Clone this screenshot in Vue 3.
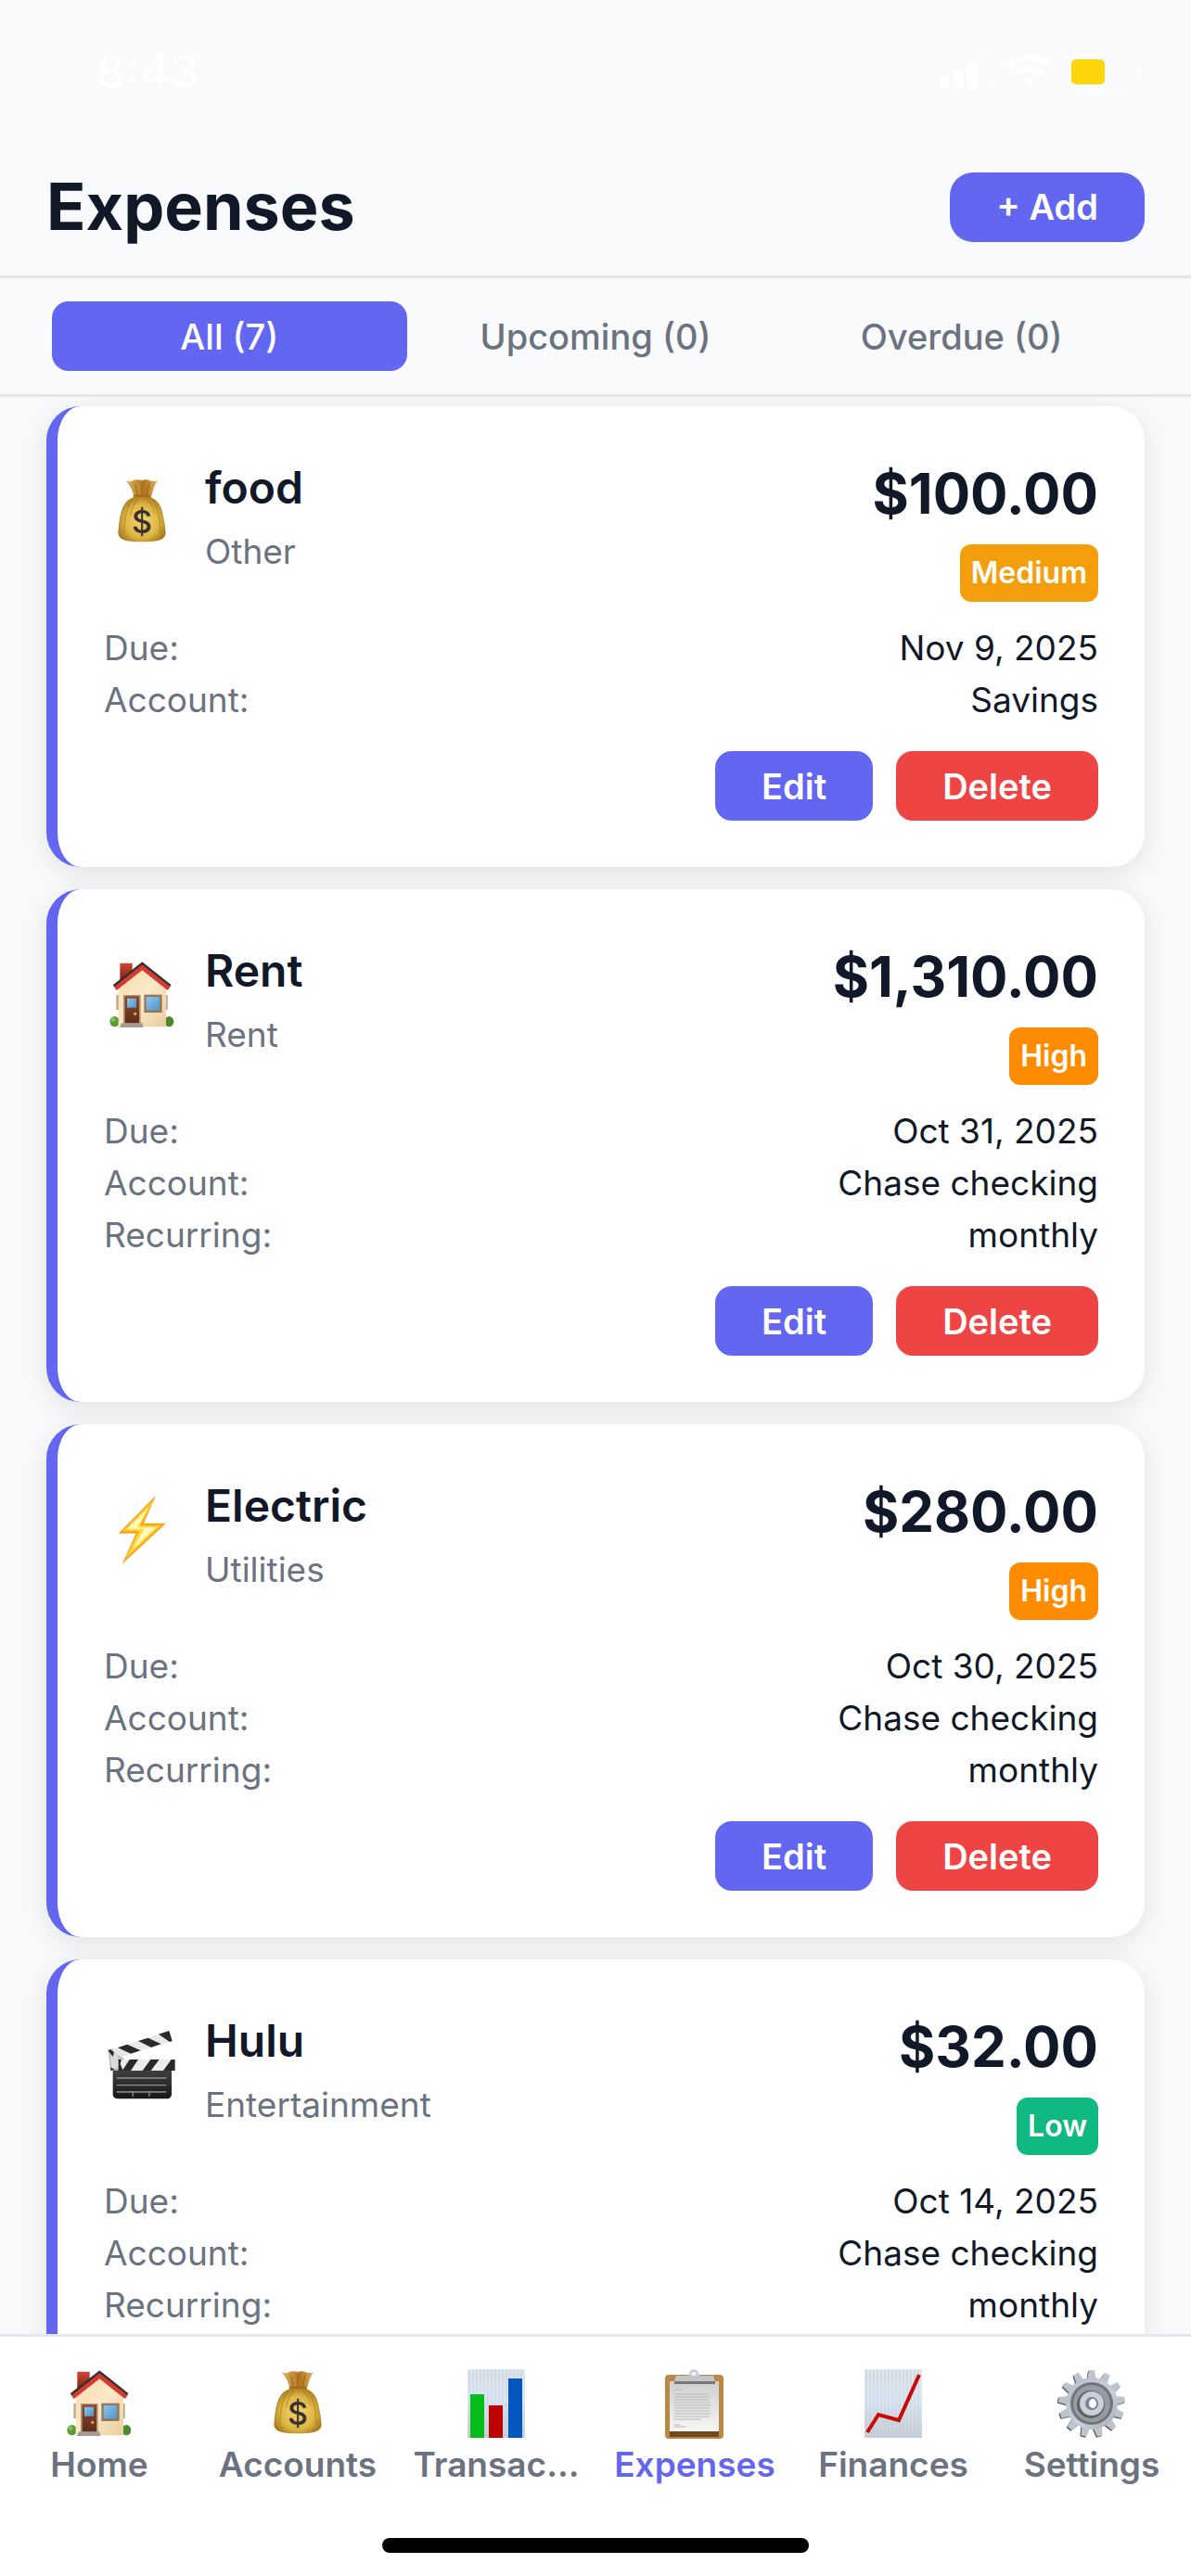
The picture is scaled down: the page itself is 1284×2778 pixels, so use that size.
<template>
  <div class="screen">
    <!-- shared icon shapes -->
    <svg class="sprite" aria-hidden="true">
      <defs>
        <linearGradient id="wall" x1="0" x2="1" y1="0" y2="1">
          <stop offset="0" stop-color="#f6dcae" />
          <stop offset="0.5" stop-color="#fbe9c8" />
          <stop offset="1" stop-color="#e8cd9f" />
        </linearGradient>
        <linearGradient id="door" x1="0" x2="0" y1="0" y2="1">
          <stop offset="0" stop-color="#8d4a2c" />
          <stop offset="1" stop-color="#5e2c1b" />
        </linearGradient>
        <linearGradient id="glass" x1="0" x2="1" y1="0" y2="1">
          <stop offset="0" stop-color="#8cc5ea" />
          <stop offset="1" stop-color="#4f97cf" />
        </linearGradient>
        <linearGradient id="chimney" x1="0" x2="0" y1="0" y2="1">
          <stop offset="0" stop-color="#d2452f" />
          <stop offset="1" stop-color="#6d1c18" />
        </linearGradient>
        <radialGradient id="sack" cx="0.5" cy="0.55" r="0.6">
          <stop offset="0" stop-color="#f2d768" />
          <stop offset="0.6" stop-color="#ddb645" />
          <stop offset="1" stop-color="#9a6a12" />
        </radialGradient>
        <linearGradient id="neck" x1="0" x2="1" y1="0" y2="0">
          <stop offset="0" stop-color="#d9b262" />
          <stop offset="0.35" stop-color="#c4903a" />
          <stop offset="0.6" stop-color="#b3741c" />
          <stop offset="1" stop-color="#e0b765" />
        </linearGradient>
        <linearGradient id="slate" x1="0" x2="0" y1="0" y2="1">
          <stop offset="0" stop-color="#3f3f3f" />
          <stop offset="1" stop-color="#171717" />
        </linearGradient>
        <linearGradient id="sheet" x1="0" x2="0" y1="0" y2="1">
          <stop offset="0" stop-color="#dde4ea" />
          <stop offset="0.4" stop-color="#dbe8f4" />
          <stop offset="1" stop-color="#c7ced6" />
        </linearGradient>
        <linearGradient id="paper" x1="0" x2="0" y1="0" y2="1">
          <stop offset="0" stop-color="#cfcfcf" />
          <stop offset="1" stop-color="#f6f6f6" />
        </linearGradient>
        <linearGradient id="steel" x1="0" x2="1" y1="0" y2="1">
          <stop offset="0" stop-color="#b4bfca" />
          <stop offset="0.6" stop-color="#c9cdd6" />
          <stop offset="1" stop-color="#a5a9b2" />
        </linearGradient>
      </defs>

      <symbol id="icon-house" viewBox="46 46 228 228">
        <ellipse cx="72" cy="246" rx="16" ry="17" fill="#5c9c38" />
        <ellipse cx="248" cy="246" rx="15" ry="17" fill="#4d8a2c" />
        <circle cx="67" cy="240" r="7" fill="#86c05c" />
        <path d="M89 57h40v30l-40 36z" fill="url(#chimney)" />
        <path d="M77 160h10v48H77zM235 160h8v48h-8z" fill="#bfa58a" />
        <path d="M84 130L160 72l78 58v133H84z" fill="url(#wall)" />
        <path d="M66 128L161 53l94 75-9 9-85-66-87 66z" fill="#33302f" />
        <path d="M70 134L161 62l91 72-9 11-82-65-83 65z" fill="#d43a2f" />
        <path d="M100 160h56v92h-56z" fill="#b79470" />
        <path d="M105 164h46v88h-46z" fill="url(#door)" />
        <path d="M112 171h30v30h-30z" fill="url(#glass)" />
        <circle cx="138" cy="221" r="5" fill="#e2a93c" />
        <path d="M94 251h66l5 14H88z" fill="#a59a90" />
        <path d="M167 159h58v58h-58z" fill="#97775a" />
        <path d="M174 166h43v43h-43z" fill="url(#glass)" />
      </symbol>

      <symbol id="icon-bag" viewBox="46 46 228 228">
        <path
          d="M108 59q14 6 24-1 14-5 28 0 12-5 24 0 12 6 26 1-14 23-20 52h-56q-4-26-26-52z"
          fill="url(#neck)"
        />
        <path d="M138 70l8 38M160 64v44M184 68l-8 40" stroke="#96601a" stroke-width="3" fill="none" />
        <path
          d="M134 112q26-7 54 0 32 14 39 52 7 29 10 65-2 14-15 20-18 8-62 8t-62-8q-13-6-15-20 2-42 10-69 9-36 41-48z"
          fill="url(#sack)"
        />
        <path
          d="M128 124q-25 30-25 105M146 120q-18 20-24 50M178 120q18 20 24 45M194 124q25 34 25 105"
          stroke="#a57519"
          stroke-opacity="0.5"
          stroke-width="4"
          fill="none"
        />
        <path d="M132 108h56" stroke="#a26a1b" stroke-width="6" />
      </symbol>

      <symbol id="icon-bolt" viewBox="46 66 228 228">
        <path d="M205 68L166 158h72L96 290l45-99H84z" fill="#fba41c" />
        <path d="M195 86l-41 80h66L109 270l42-87H99z" fill="#ffd93b" />
        <path d="M181 108l-37 64h60l-71 68 34-64h-54z" fill="#fffbc0" />
      </symbol>

      <symbol id="icon-clapper" viewBox="46 57 228 228">
        <path d="M50 124l23-6 31 36v34H58z" fill="#bcc2c5" />
        <path d="M58 128l22 8 8 44-26 4z" fill="#d9dddf" />
        <path d="M50 122l22-2-6 24zM58 178l14 8-12 3z" fill="#222" />
        <path d="M60 122L248 60l10 33-166 52z" fill="#e8e8e8" />
        <path
          d="M82 115l30-11 44 20-32 10zM148 93l32-10 42 20-32 11zM214 71l34-11 10 33-8 3z"
          fill="#2b2b2b"
        />
        <path d="M66 188h190v78q-2 14-17 14H82q-15-1-16-14z" fill="url(#slate)" />
        <path d="M84 153h183v36H84z" fill="#2a2a2a" />
        <path d="M148 153h40l-26 36h-38zM216 153h39l-26 36h-40zM94 153h26l-22 34-8-20z" fill="#ececec" />
        <path d="M78 213h161M78 236h161M78 258h161M131 255v17M184 255v17" stroke="#919191" stroke-width="4" />
      </symbol>

      <symbol id="icon-bars" viewBox="0 0 76 76">
        <path d="M7 1h62v74H7z" fill="url(#sheet)" />
        <path :d="ruling" stroke="#b9c6d1" stroke-opacity="0.5" />
        <path d="M10 28h15v47H10z" fill="#07bd1b" />
        <path d="M30 40h15v35H30z" fill="#bd0404" />
        <path d="M51 11h15v64H51z" fill="#0557c0" />
      </symbol>

      <symbol id="icon-clipboard" viewBox="0 0 76 76">
        <rect x="6" y="7" width="63" height="69" rx="4" fill="#b98842" />
        <path d="M11 68h53v6H11z" fill="#704a1e" />
        <path d="M11 14h53v54H11z" fill="url(#paper)" />
        <path
          d="M16 23h8M16 28h36M16 31h38M16 34h37M16 37h38M16 40h40M16 43h38M16 46h39M16 49h39M16 52h38M16 55h29M16 61h6M16 63h12"
          stroke="#b9b9b9"
        />
        <path d="M31 10q1-9 6-9t7 9z" fill="#c6d0da" />
        <circle cx="37" cy="6" r="2" fill="#fff" />
        <path d="M18 8h40l2 6H16z" fill="#c3c6c9" />
        <path d="M16 14h44v3H16z" fill="#797573" />
      </symbol>

      <symbol id="icon-trend" viewBox="0 0 76 76">
        <path d="M7 1h62v74H7z" fill="url(#sheet)" />
        <path :d="ruling" stroke="#b9c6d1" stroke-opacity="0.5" />
        <path d="M10 69l12-19 22 6L66 7" fill="none" stroke="#c90808" stroke-width="4" />
      </symbol>

      <symbol id="icon-gear" viewBox="0 0 76 76">
        <g fill="#56504d" transform="translate(-1 1)">
          <path v-for="n in 13" :key="n" d="M33 14l2-12h6l2 12z" :transform="toothTurn(n)" />
        </g>
        <g fill="#bcc5cf">
          <path v-for="n in 13" :key="n" d="M33 14l2-12h6l2 12z" :transform="toothTurn(n)" />
        </g>
        <circle cx="38" cy="38" r="28" fill="url(#steel)" />
        <circle cx="38" cy="38" r="23" fill="#6f757d" />
        <circle cx="38" cy="38" r="20" fill="#969ca4" />
        <circle cx="37" cy="39" r="15" fill="#63605f" />
        <circle cx="38" cy="38" r="13" fill="#c8d0da" />
        <circle cx="38" cy="38" r="7" fill="#7d858f" />
        <ellipse cx="39" cy="38" rx="4" ry="5" fill="#fff" />
      </symbol>
    </svg>

    <div class="status-bar">
      <span class="clock">8:43</span>
      <svg class="status-icons" width="220" height="40" viewBox="0 0 220 40" aria-hidden="true">
        <g fill="#fff">
          <rect x="1" y="24" width="11" height="14" rx="3" />
          <rect x="16" y="18" width="11" height="20" rx="3" />
          <rect x="31" y="10" width="11" height="28" rx="3" />
          <rect x="47" y="3" width="11" height="35" rx="3" opacity="0.3" />
          <path d="M98 38l-7-8q7-6 14 0z" />
        </g>
        <g fill="none" stroke="#fff" stroke-width="7">
          <path d="M77 13q21-18 42 0" />
          <path d="M85 23q13-11 26 0" />
        </g>
        <rect x="138" y="2" width="72" height="36" rx="10" fill="none" stroke="#fff" stroke-width="3" opacity="0.4" />
        <path d="M214 14q5 2 5 6t-5 6z" fill="#fff" opacity="0.4" />
        <rect x="143" y="7" width="36" height="27" rx="5" fill="#ffd60a" />
      </svg>
    </div>

    <header class="header">
      <h1>Expenses</h1>
      <button class="btn add" type="button">+ Add</button>
    </header>

    <div class="filters">
      <button
        v-for="tab in tabs"
        :key="tab.label"
        type="button"
        class="filter"
        :class="{ active: tab.label === activeTab }"
        @click="activeTab = tab.label"
      >
        {{ tab.label }} ({{ tab.count }})
      </button>
    </div>

    <main class="list">
      <article v-for="item in expenses" :key="item.name" class="card">
        <div class="card-top">
          <svg class="icon" viewBox="0 0 76 76" aria-hidden="true">
            <use :href="'#icon-' + item.icon" width="76" height="76" />
            <text v-if="item.icon === 'bag'" x="38" y="61" class="bag-sign">$</text>
          </svg>
          <div class="info">
            <h2>{{ item.name }}</h2>
            <p>{{ item.category }}</p>
          </div>
          <div class="cost">
            <strong>{{ item.amount }}</strong>
            <span class="badge" :class="item.priority.toLowerCase()">{{ item.priority }}</span>
          </div>
        </div>
        <dl class="details">
          <div v-for="row in item.rows" :key="row[0]" class="row">
            <dt>{{ row[0] }}:</dt>
            <dd>{{ row[1] }}</dd>
          </div>
        </dl>
        <div class="actions">
          <button class="btn" type="button">Edit</button>
          <button class="btn delete" type="button">Delete</button>
        </div>
      </article>
    </main>

    <nav class="tab-bar">
      <div class="tab-links">
        <a
          v-for="link in links"
          :key="link.label"
          :href="'#' + link.icon"
          :class="{ current: link.label === 'Expenses' }"
        >
          <svg class="icon" viewBox="0 0 76 76" aria-hidden="true">
            <use :href="'#icon-' + link.icon" width="76" height="76" />
            <text v-if="link.icon === 'bag'" x="38" y="61" class="bag-sign">$</text>
          </svg>
          <span>{{ link.label }}</span>
        </a>
      </div>
      <div class="home-indicator"></div>
    </nav>
  </div>
</template>

<script setup>
import { ref } from "vue";

const activeTab = ref("All");
const tabs = [
  { label: "All", count: 7 },
  { label: "Upcoming", count: 0 },
  { label: "Overdue", count: 0 },
];

const expenses = ref([
  {
    name: "food",
    category: "Other",
    icon: "bag",
    amount: "$100.00",
    priority: "Medium",
    rows: [
      ["Due", "Nov 9, 2025"],
      ["Account", "Savings"],
    ],
  },
  {
    name: "Rent",
    category: "Rent",
    icon: "house",
    amount: "$1,310.00",
    priority: "High",
    rows: [
      ["Due", "Oct 31, 2025"],
      ["Account", "Chase checking"],
      ["Recurring", "monthly"],
    ],
  },
  {
    name: "Electric",
    category: "Utilities",
    icon: "bolt",
    amount: "$280.00",
    priority: "High",
    rows: [
      ["Due", "Oct 30, 2025"],
      ["Account", "Chase checking"],
      ["Recurring", "monthly"],
    ],
  },
  {
    name: "Hulu",
    category: "Entertainment",
    icon: "clapper",
    amount: "$32.00",
    priority: "Low",
    rows: [
      ["Due", "Oct 14, 2025"],
      ["Account", "Chase checking"],
      ["Recurring", "monthly"],
    ],
  },
]);

const links = [
  { label: "Home", icon: "house" },
  { label: "Accounts", icon: "bag" },
  { label: "Transac...", icon: "bars" },
  { label: "Expenses", icon: "clipboard" },
  { label: "Finances", icon: "trend" },
  { label: "Settings", icon: "gear" },
];

// thin vertical rules on the chart paper
const ruling = Array.from({ length: 15 }, (_, i) => `M${9 + i * 4} 2v72`).join("");

const toothTurn = (n) => `rotate(${Math.round((n * 360) / 13)} 38 38)`;
</script>

<style>
body {
  background: #f9fafc;
}
</style>

<style scoped>
.screen {
  height: 100vh;
  display: flex;
  flex-direction: column;
  background: #f9fafc;
  color: #111827;
  font-family: Inter, "Liberation Sans", sans-serif;
  font-size: 37px;
  overflow: hidden;
}
.sprite {
  position: absolute;
  width: 0;
  height: 0;
}
.bag-sign {
  font-size: 34px;
  font-weight: 500;
  text-anchor: middle;
  fill: #3a3030;
}
h1,
h2,
p,
dl,
dd {
  margin: 0;
}
button {
  border: 0;
  font: inherit;
  cursor: pointer;
}
.icon {
  width: 76px;
  height: 76px;
  flex: none;
}
.status-bar {
  display: flex;
  justify-content: space-between;
  align-items: center;
  box-sizing: border-box;
  height: 153px;
  padding: 0 52px 0 104px;
  color: #fff;
}
.clock {
  font-size: 50px;
  font-weight: 500;
}
.header {
  display: flex;
  justify-content: space-between;
  align-items: center;
  padding: 24px 50px 28px;
  border-bottom: 3px solid #e5e7eb;
}
h1 {
  font-size: 70px;
  line-height: 92px;
  font-weight: 700;
}
.btn {
  height: 75px;
  padding: 0 50px;
  border-radius: 18px;
  background: #6366f1;
  color: #fff;
  font-size: 38px;
  font-weight: 600;
}
.btn.add {
  border-radius: 25px;
}
.btn.delete {
  background: #ef4444;
}
.filters {
  display: flex;
  gap: 12px;
  padding: 25px 56px;
  border-bottom: 3px solid #e5e7eb;
}
.filter {
  flex: 1;
  height: 75px;
  border-radius: 18px;
  background: transparent;
  color: #6b7280;
  font-size: 38px;
  font-weight: 500;
}
.filter.active {
  background: #6366f1;
  color: #fff;
}
.list {
  flex: 1;
  min-height: 0;
  display: flex;
  flex-direction: column;
  gap: 24px;
  padding: 10px 50px 0;
  overflow-y: auto;
  scrollbar-width: none;
}
.card {
  flex: none;
  padding: 50px;
  border-left: 12px solid #6366f1;
  border-radius: 37px;
  background: #fff;
  box-shadow: 0 6px 30px rgba(0, 0, 0, 0.1);
}
.card-top {
  display: flex;
  align-items: flex-start;
  margin-bottom: 25px;
}
.card-top .icon {
  margin: 26px 30px 0 3px;
}
.info {
  flex: 1;
}
h2 {
  font-size: 48px;
  line-height: 76px;
  font-weight: 600;
}
.info p {
  line-height: 62px;
  color: #6b7280;
}
.cost {
  display: flex;
  flex-direction: column;
  align-items: flex-end;
  gap: 10px;
}
.cost strong {
  font-size: 60px;
  line-height: 89px;
  font-weight: 700;
}
.badge {
  padding: 0 12px;
  border-radius: 12px;
  font-size: 32px;
  line-height: 62px;
  font-weight: 600;
  color: #fff;
}
.badge.medium {
  background: #f59e0b;
}
.badge.high {
  background: #ff8c00;
}
.badge.low {
  background: #10b981;
}
.row {
  display: flex;
  justify-content: space-between;
  padding-bottom: 6px;
  line-height: 50px;
}
.row dt {
  color: #6b7280;
}
.actions {
  display: flex;
  justify-content: flex-end;
  gap: 25px;
  margin-top: 24px;
}
.tab-bar {
  flex: none;
  box-sizing: border-box;
  height: 261px;
  padding-top: 34px;
  border-top: 3px solid #e5e7eb;
  background: #fff;
}
.tab-links {
  display: flex;
}
.tab-links a {
  flex: 1 1 0;
  min-width: 0;
  display: flex;
  flex-direction: column;
  align-items: center;
  gap: 4px;
  color: #6b7280;
  font-weight: 600;
  line-height: 48px;
  text-decoration: none;
}
.tab-links a.current {
  color: #6366f1;
}
.home-indicator {
  width: 460px;
  height: 16px;
  margin: 55px auto 0;
  border-radius: 8px;
  background: #000;
}
</style>
